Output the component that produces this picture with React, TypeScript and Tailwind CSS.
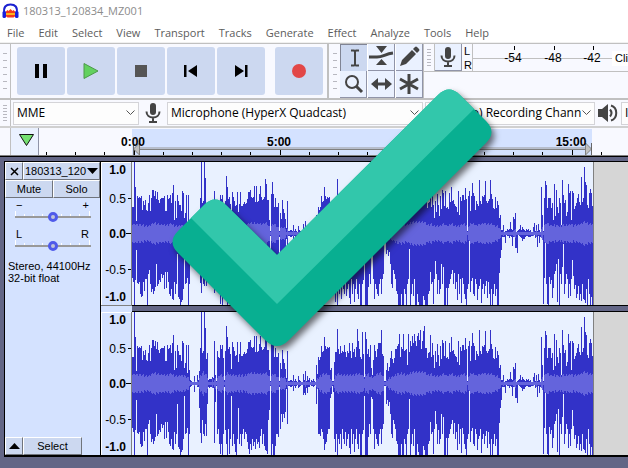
import React from "react";

type Segment = { up: string; down: string };

// Peak heights, one value per drawn column, in pixels away from the zero line.
const SEGMENTS: Segment[] = [
  {
    up: "26 26 71 46 12 37 35 36 35 37 23 32 28 33 23 22 30 38 22 35 43 43 37 42 34 41 33 30 34 35 35 35 37 22 22 38 34 35 38 30 40 48 13 32 15 38 32 28 28 22 42 40 15 20 38 10 38 13 3 2 1 1 7 1 1 8 3 12 35 71 30 32 71 55 24 30 3 4",
    down: "44 48 71 46 16 49 50 48 60 63 62 48 57 45 45 71 40 36 50 58 55 60 57 53 30 52 50 46 48 40 44 41 55 38 54 38 48 60 62 55 65 66 48 60 50 20 63 65 71 68 66 55 12 50 49 44 71 50 3 2 1 1 8 1 1 3 3 24 49 59 36 50 52 40 52 20 3 4",
  },
  {
    up: "4 4 6 5 42 8 2 32 26 25 38 34 38 25 3 32 57 46 34 36 29 14 41 36 32 27 28 41 21 29 41 27 27 29 31 29 30 34 41 41 43 36 35 36 47 31 47 31 32 39 47 36 33 34 36 54 49 33 33 13 2 39 51 39 26 35 26 26 30 2 20 14 33 24 20 14 5 32 2 2 3 3 2 8 2 4 2 1 7 3 2 1 1 9 3 12 2 7 3 5 1 3 2 4 2 1 18 9 26 23 26 37 31 32 46 37 34 36 35 36 13 15 2 2 21 31 31 54 34 29 37 30 32 31 38 31 26 32 30 40 32 25 40 31 34 26 36 54 42 34 26 24 51 29 6 51 44 29 34 26 38 15 8 23 38 32 26 34 40 40 40 53 29 27 2 2 13 20 12 16 25 32 24 20 25 34 34 37 39 49 26 36 34 49 32 33 34 18 49 31 42 37 47 40 49 42 37 47",
    down: "3 3 3 4 59 18 2 50 45 60 70 60 71 50 3 46 60 71 45 70 55 12 62 50 60 68 71 55 24 60 50 62 50 45 55 48 50 58 65 70 60 66 55 62 58 65 55 60 58 64 52 45 60 50 62 66 67 70 36 26 2 71 60 71 71 62 50 50 53 3 45 30 38 30 34 28 5 40 2 2 3 3 2 7 2 4 2 1 4 3 2 1 1 11 9 11 4 9 3 3 1 2 2 3 2 1 20 4 50 50 52 45 48 55 66 60 58 50 45 45 14 10 2 8 55 68 50 71 55 60 50 65 45 55 60 48 62 55 50 64 70 45 60 50 68 55 45 60 65 50 71 71 50 46 12 71 71 71 53 40 50 13 15 45 65 50 55 60 62 50 45 60 45 40 2 2 20 16 22 18 30 50 54 36 40 45 57 60 71 71 71 60 71 71 55 60 71 50 45 15 71 60 50 62 45 71 71 60 68 71",
  },
  {
    up: "50 43 53 34 42 52 57 35 35 25 30 31 48 26 40 28 15 32 21 39 28 17 37 24 43 40 27 42 25 26 24 40 31 46 32 33 29 27 26 21 42 18 36 32 38 38 33 45 34 2 37 42 22 37 50 40 37 23 32 29 27 53 32 29 37 36 38 52 32 30 32 34 53 39 34 25 24 36 25 32 28 15 18 3 3 8 1 2 2 4 3 4 11 4 3 16 14 20 1 2 3 4 8 3 6 4 3 2 4 3 4 2 3 1 1 6 10 2 8 2 9 3 1 46 18 2 35 52 48 25 35 35 35 25 30 13 49 17 43 26 20 35 30 8 53 38 30 33 17 21 49 40 42 13 42 40 24 27 30 35 39 31 28 56 31 35 66 51 48 28 25 40 44 40 27",
    down: "71 71 71 62 66 71 71 71 60 57 38 50 48 70 45 27 40 60 46 60 55 30 50 33 71 71 54 71 54 50 45 40 36 50 39 55 48 66 40 60 45 69 44 50 60 65 71 55 50 2 58 47 44 60 62 45 50 66 55 52 45 69 55 50 60 52 47 64 48 60 71 55 71 60 50 62 55 71 71 39 24 16 3 3 3 9 1 2 2 4 2 3 12 3 3 14 14 19 1 2 3 4 7 5 5 3 2 2 3 3 3 2 2 1 1 4 2 13 2 9 3 1 2 70 44 2 50 70 71 43 50 46 64 54 40 37 30 68 25 71 40 50 33 10 60 50 40 45 64 50 62 45 26 42 55 51 64 60 52 66 60 67 50 65 66 69 55 71 45 60 71 63 71 43 43",
  },
];

const WIDTH = 461;
const parse = (key: keyof Segment) =>
  SEGMENTS.flatMap((s) => s[key].split(" ").map(Number)).slice(0, WIDTH);
const UP = parse("up");
const DOWN = parse("down");
const RMS = UP.map((v, i) => {
  if (v < 6) return Math.min(v, 1);
  const near = UP.slice(Math.max(0, i - 2), i + 3).map((n) => Math.min(n, 50));
  const mean = near.reduce((a, b) => a + b, 0) / near.length;
  return Math.max(1, Math.min(v - 2, Math.round(mean / 4 + (i % 3) - 1)));
});
const bars = (up: number[], down: number[]) =>
  up.map((u, i) => `M${i} ${71 - u}h1V${72 + (down[i] ?? u)}h-1z`).join("");
const PEAK_PATH = bars(UP, DOWN);
const RMS_PATH = bars(RMS, RMS);

function Waveform() {
  return (
    <div className="flex h-[145px] border-y border-black bg-[#d6d6d6]">
      <svg className="shrink-0 bg-[#e9f1ff]" width={WIDTH} height="143" viewBox="0 0 461 143" shapeRendering="crispEdges">
        <path d={PEAK_PATH} fill="#3232c8" />
        <path d={RMS_PATH} fill="#6464dc" />
      </svg>
      <div className="w-px bg-[#808080]" />
    </div>
  );
}

const LEVELS = [
  { label: "1.0", y: 12, bold: true },
  { label: "0.5", y: 41, bold: false },
  { label: "0.0", y: 76, bold: true },
  { label: "-0.5", y: 112, bold: false },
  { label: "-1.0", y: 139, bold: true },
];

function LevelRuler() {
  return (
    <svg width="31" height="143" className="block bg-[#d4e2ff]" fontFamily="Liberation Sans, Arial, sans-serif" fontSize="12">
      {LEVELS.map((l) => (
        <text key={l.label} x="25" y={l.y} textAnchor="end" fontWeight={l.bold ? 700 : 400}>{l.label}</text>
      ))}
      <path d="M27 36.5h3M25 71.5h5M27 107.5h3" stroke="#000" shapeRendering="crispEdges" />
      <path d="M30.5 0v143" stroke="#808080" shapeRendering="crispEdges" />
      <path d="M0 .5h30M.5 0v143" stroke="#fff" shapeRendering="crispEdges" />
    </svg>
  );
}

function Grip({ className = "" }: { className?: string }) {
  return (
    <div className={`flex w-[11px] shrink-0 flex-col items-center justify-evenly border-r border-[#c0c0c0] bg-[#f8f9ff] py-[3px] ${className}`}>
      {Array.from({ length: 6 }, (_, i) => (
        <span key={i} className="h-px w-1 bg-[#b8b8c0]" />
      ))}
    </div>
  );
}

function Transport({ label, children, className = "" }: { label: string; children: React.ReactNode; className?: string }) {
  return (
    <button aria-label={label} className={`flex size-12 shrink-0 items-center justify-center rounded-[3px] bg-[#ccd8f0] ${className}`}>
      <svg width="24" height="24" viewBox="0 0 24 24">{children}</svg>
    </button>
  );
}

function Tool({ label, active = false, children }: { label: string; active?: boolean; children: React.ReactNode }) {
  return (
    <button
      aria-label={label}
      className={
        active
          ? "flex size-[27px] items-center justify-center border-t border-l border-[#808494] bg-[#ccd8f0]"
          : "flex size-[27px] items-center justify-center border-r border-b border-[#9094a8] bg-[#eaf1ff]"
      }
    >
      <svg width="26" height="26" viewBox="0 0 26 26" fill="#444" stroke="#444">{children}</svg>
    </button>
  );
}

function MicShape() {
  return (
    <>
      <rect x="10" y="3" width="6" height="12" rx="3" stroke="none" />
      <path d="M6.500 11.500c0 4 3 6 6.500 6s6.500-2 6.500-6M13 17.500v4M9 22h8" fill="none" strokeWidth="2" />
    </>
  );
}

function Combo({ label, value, className }: { label: string; value: string; className: string }) {
  return (
    <label className={`relative flex h-[23px] shrink-0 items-center ${className}`}>
      <select aria-label={label} className="h-full w-full appearance-none overflow-hidden rounded-none border border-[#d4d4d8] bg-[#fdfdfd] pr-3 pl-[3px] text-[12px] text-clip whitespace-nowrap text-black">
        <option>{value}</option>
      </select>
      <svg className="pointer-events-none absolute right-1" width="9" height="6" viewBox="0 0 9 6" fill="none" stroke="#555">
        <path d="M.5 .5l4 4 4-4" />
      </svg>
    </label>
  );
}

function TrackSlider({ label, left, right }: { label: string; left: string; right: string }) {
  return (
    <div className="h-[29px] px-[10px] text-[11px] leading-[11px]">
      <div className="flex justify-between px-px">
        <span>{left}</span>
        <span>{right}</span>
      </div>
      <div className="relative h-3">
        <svg className="absolute inset-x-0 top-0" width="76" height="12" shapeRendering="crispEdges">
          <path d="M.5 0v5M9.500 3v2M18.500 3v2M27.500 3v2M46.500 3v2M55.500 3v2M64.500 3v2M74.500 0v5" stroke="#fff" />
          <path d="M0 6h76" stroke="#999" strokeWidth="2" />
        </svg>
        <input
          type="range"
          aria-label={label}
          defaultValue={50}
          className="relative block h-3 w-full appearance-none bg-transparent [&::-webkit-slider-thumb]:size-[10px] [&::-webkit-slider-thumb]:appearance-none [&::-webkit-slider-thumb]:rounded-full [&::-webkit-slider-thumb]:border-[3px] [&::-webkit-slider-thumb]:border-[#4f5aea] [&::-webkit-slider-thumb]:bg-[#c0c4d8]"
        />
      </div>
    </div>
  );
}

const panelButton = "flex items-center justify-center border-r border-b border-r-[#70747c] border-b-[#70747c] border-t border-l border-t-white border-l-white bg-[#ccd8f0]";

function TrackPanel() {
  return (
    <div className="flex w-24 shrink-0 flex-col border-r border-black bg-[#d4e2ff] text-[11px]">
      <div className="flex h-[18px]">
        <button aria-label="Close" className={`w-[18px] ${panelButton}`}>
          <svg width="9" height="9" viewBox="0 0 9 9" stroke="#000" strokeWidth="1.500"><path d="M1 1l7 7M8 1L1 8" /></svg>
        </button>
        <button className={`flex-1 gap-px whitespace-nowrap ${panelButton}`}>
          180313_120
          <svg width="11" height="6"><path d="M0 0h11L5.500 6z" /></svg>
        </button>
      </div>
      <div className="flex h-[18px]">
        <button className={`w-12 ${panelButton}`}>Mute</button>
        <button className={`flex-1 ${panelButton}`}>Solo</button>
      </div>
      <div className="pt-[2px]">
        <TrackSlider label="Gain" left="−" right="+" />
        <TrackSlider label="Pan" left="L" right="R" />
      </div>
      <p className="pt-[2px] pl-[3px] leading-3 whitespace-nowrap">
        Stereo, 44100Hz
        <br />
        32-bit float
      </p>
      <div className="mt-auto flex h-[18px]">
        <button aria-label="Collapse" className={`w-[18px] ${panelButton}`}>
          <svg width="11" height="6"><path d="M0 6h11L5.500 0z" /></svg>
        </button>
        <button className={`w-[59px] ${panelButton}`}>Select</button>
      </div>
    </div>
  );
}

const TICKS = Array.from({ length: 21 }, (_, i) => Math.round(46 + i * 29.2));

function Timeline() {
  return (
    <div className="relative flex h-[27px] overflow-hidden bg-[#f8f9ff]">
      <div className="w-[11px] shrink-0 border-r border-[#c0c0c0]" />
      <button aria-label="Pin play head" className="flex w-7 shrink-0 items-center justify-center border-r border-[#9094a8] bg-[#eaf1ff] pb-1 pl-1">
        <svg width="17" height="14" viewBox="0 0 17 14"><path d="M1.500 1.500h14l-7 11z" fill="#74e070" stroke="#111" /></svg>
      </button>
      <svg className="h-[27px] min-w-0 flex-1" fontFamily="Liberation Sans, Arial, sans-serif" fontSize="12" fontWeight="700">
        <g transform="translate(-39 0)">
          <path d="M132 1h460v26H132z" fill="#d4e2ff" />
          <path d="M137 20h450" stroke="#999" />
          <path d="M137 21.500h450" stroke="#808080" />
          {TICKS.map((x, i) => (
            <path key={x} d={`M${x + 0.5} ${i % 5 === 3 ? 22 : 24}V27`} stroke="#000" />
          ))}
          <path d="M139.500 15v12l-6-6zM585.500 15v12l6-6z" fill="#c0c0c0" stroke="#808080" />
          <path d="M133.500 16v11M591.500 15v12" stroke="#666" />
          <g textAnchor="middle">
            <text x="133" y="18">0:00</text>
            <text x="279" y="18">5:00</text>
            <text x="571" y="18">15:00</text>
          </g>
        </g>
      </svg>
    </div>
  );
}

const MENUS = ["File", "Edit", "Select", "View", "Transport", "Tracks", "Generate", "Effect", "Analyze", "Tools", "Help"];

export default function App() {
  return (
    <main className="relative min-h-screen overflow-hidden bg-[#636686] font-['Open_Sans','Noto_Sans',sans-serif] text-black">
      <header className="bg-white">
        <div className="flex h-[22px] items-center gap-1 pl-[2px] text-[11px] text-[#8c8c8c]">
          <svg width="17" height="17" viewBox="0 0 17 17">
            <path d="M3.500 9l2-2 1 1 2-2 2 2 1-1 2 2v4l-2 1.500h-6l-2-1.500z" fill="#f43a1d" />
            <path d="M4 10h9v2H4z" fill="#ffb21c" />
            <path d="M2.500 10C1 4 4 1.500 8.500 1.500S16 4 14.500 10" fill="none" stroke="#1b21d0" strokeWidth="2" />
            <rect x="0.500" y="8" width="3.500" height="7" rx="1.500" fill="#1720dc" />
            <rect x="13" y="8" width="3.500" height="7" rx="1.500" fill="#1720dc" />
          </svg>
          180313_120834_MZ001
        </div>
        <nav className="flex h-[21px] gap-[14px] border-b border-[#f0f0f0] pl-[7px] text-[11px] leading-[22px] text-[#5c5c5c]">
          {MENUS.map((m) => (
            <button key={m}>{m}</button>
          ))}
        </nav>
      </header>

      <section aria-label="Toolbars" className="flex h-[57px] overflow-hidden border-t border-b-2 border-[#c0c0c0] bg-[#f8f9ff]">
        <Grip />
        <div className="flex shrink-0 items-center gap-[2px] pr-1 pl-[6px]">
          <Transport label="Pause"><path d="M6 5h4v14H6zM14 5h4v14h-4z" /></Transport>
          <Transport label="Play"><path d="M5 4.500v15L19 12z" fill="#62d15f" stroke="#4c9a4a" /></Transport>
          <Transport label="Stop"><path d="M6 6h12v12H6z" fill="#555" /></Transport>
          <Transport label="Skip to start"><path d="M5 6h2.500v12H5zM18 6v12l-9-6z" /></Transport>
          <Transport label="Skip to end"><path d="M6 6v12l9-6zM16 6h2.500v12H16z" /></Transport>
          <Transport label="Record" className="ml-2"><circle cx="12" cy="12" r="7" fill="#e24747" /></Transport>
        </div>
        <div className="w-[2px] shrink-0 bg-[#c0c0c0]" />
        <Grip className="border-r-0" />
        <div className="grid shrink-0 grid-cols-3 gap-x-px bg-white">
          <Tool label="Selection tool" active>
            <path d="M10 5.500h3l1 1 1-1h3M14 6v14M10 20.500h3l1-1 1 1h3" fill="none" strokeWidth="2" />
          </Tool>
          <Tool label="Envelope tool">
            <path d="M8 2h11l-5.500 7zM13.500 15l5.500 6H8z" stroke="none" />
            <path d="M1 13h8c6 0 8-3 16-4" fill="none" strokeWidth="3" />
          </Tool>
          <Tool label="Draw tool">
            <path d="M4 22l2-6L16 6l4 4L10 20zM17 5l2-2q1-1 2 0l2 2q1 1 0 2l-2 2z" stroke="none" />
          </Tool>
          <Tool label="Zoom tool">
            <circle cx="12" cy="11" r="6" fill="none" strokeWidth="2" />
            <path d="M16 15l6 6" strokeWidth="3" />
          </Tool>
          <Tool label="Time shift tool">
            <path d="M6 13h14" strokeWidth="3" />
            <path d="M10 7v12l-7-6zM17 7v12l7-6z" stroke="none" />
          </Tool>
          <Tool label="Multi-tool">
            <path d="M13 3v20M4 8l18 10M22 8L4 18" strokeWidth="3" />
          </Tool>
        </div>
        <div className="min-w-0 flex-1 border-l border-[#c0c0c0]">
          <div className="flex h-7 border-b border-[#c0c0c0]">
            <Grip />
            <Tool label="Record meter"><MicShape /></Tool>
            <div className="flex w-[11px] shrink-0 flex-col border-r border-[#c0c0c0] pl-[2px] font-['Liberation_Sans',Arial,sans-serif] text-[11px] leading-[14px]">
              <span>L</span>
              <span>R</span>
            </div>
            <svg className="h-[27px] min-w-0 flex-1" fontFamily="Liberation Sans, Arial, sans-serif" fontSize="12">
              <path d="M0 14.500h200" stroke="#c0c0c0" />
              <path d="M41.500 2v4M81.500 2v4M120.500 2v4" stroke="#000" />
              <g textAnchor="middle">
                <text x="40" y="18">-54</text>
                <text x="80" y="18">-48</text>
                <text x="119" y="18">-42</text>
              </g>
              <path d="M139 7h60v15h-60z" fill="#fff" />
              <text x="142" y="18" fontSize="11">Cli</text>
            </svg>
          </div>
        </div>
      </section>

      <section aria-label="Devices" className="flex h-7 items-stretch overflow-hidden border-b-2 border-[#d0d0d0] bg-[#f8f9ff]">
        <Grip />
        <div className="flex shrink-0 items-center pl-[2px]">
          <Combo label="Audio host" value="MME" className="w-[126px]" />
          <svg className="mx-[3px]" width="22" height="22" viewBox="2 2 22 22" fill="#444" stroke="#444"><MicShape /></svg>
          <Combo label="Recording device" value="Microphone (HyperX Quadcast)" className="w-[256px]" />
          <Combo label="Recording channels" value="2 (Stereo) Recording Chann" className="ml-[2px] w-[170px]" />
          <svg className="mx-[3px]" width="20" height="20" viewBox="0 0 20 20" fill="#444" stroke="#444">
            <path d="M0 6h4l6-5v18l-6-5H0z" stroke="none" />
            <path d="M12 6.500q3 3.500 0 7M13 2.500c7 2 7 13 0 15" fill="none" strokeWidth="2" />
          </svg>
          <Combo label="Playback device" value="I" className="w-[200px]" />
        </div>
      </section>

      <Timeline />
      <div className="h-[2px] border-t border-b border-t-[#808080] border-b-black" />

      <section aria-label="Audio track" className="mt-1 ml-1 flex border-b-2 border-l border-black font-['Liberation_Sans',Arial,sans-serif]">
        <div className="flex border-t border-black">
          <TrackPanel />
          <div className="w-[31px] shrink-0 bg-[#d4e2ff]">
            <LevelRuler />
            <div className="h-[7px] border-t border-[#808080]" />
            <LevelRuler />
          </div>
        </div>
        <div className="-mb-px flex min-w-0 flex-1 flex-col gap-[5px]">
          <Waveform />
          <Waveform />
        </div>
      </section>

      <svg className="pointer-events-none absolute top-0 left-0 drop-shadow-[3px_4px_3px_rgba(0,0,0,0.55)]" width="628" height="468" viewBox="0 0 628 468" aria-hidden="true">
        <path d="M178 231L204 205Q215 194 226 205L277 255L438 95Q449 84 460 95L486 121Q497 132 486 143L289 340Q277 352 265 340L178 253Q167 242 178 231z" fill="#08af91" />
        <path d="M191 218L204 205Q215 194 226 205L277 255L438 95Q449 84 460 95L474 109L277 304z" fill="#32c7ab" />
      </svg>
    </main>
  );
}
